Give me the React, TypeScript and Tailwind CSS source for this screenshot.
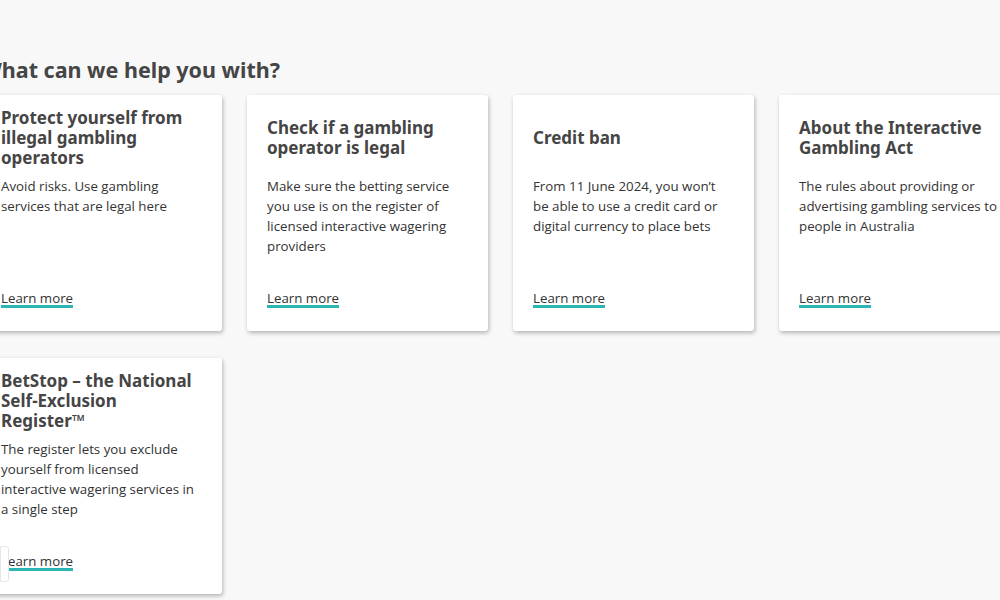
import React from "react";

const cards = [
  {
    title: "Protect yourself from illegal gambling operators",
    body: "Avoid risks. Use gambling services that are legal here",
  },
  {
    title: "Check if a gambling operator is legal",
    body: "Make sure the betting service you use is on the register of licensed interactive wagering providers",
  },
  {
    title: "Credit ban",
    body: "From 11 June 2024, you won\u2019t be able to use a credit card or digital currency to place bets",
  },
  {
    title: "About the Interactive Gambling Act",
    body: "The rules about providing or advertising gambling services to people in Australia",
  },
  {
    title: "BetStop \u2013 the National Self-Exclusion Register\u2122",
    body: "The register lets you exclude yourself from licensed interactive wagering services in a single step",
  },
];

function Card({ title, body, idx }: { title: string; body: string; idx: number }) {
  return (
    <div className="relative flex h-[236px] flex-col rounded-[3px] bg-white pl-5 pr-4 pt-[13px] pb-[22px] shadow-[1px_2px_4px_rgba(0,0,0,0.28)]">
      <div className="flex min-h-[60px] items-center">
        <h3 className="max-w-[193px] text-[17px] font-bold leading-[20px] text-[#454545]" style={{ fontFamily: '"Noto Sans", sans-serif' }}>
          {title}
        </h3>
      </div>
      <p className="mt-2 max-w-[201px] text-[13.3px] leading-[20px] text-[#333]" style={{ fontFamily: '"Open Sans", sans-serif' }}>
        {body}
      </p>
      <div className="mt-auto">
        <span className="inline-block border-b-[3px] border-[#2cb5b3] text-[13.3px] leading-[14px] text-[#333]" style={{ fontFamily: '"Open Sans", sans-serif' }}>
          Learn more
        </span>
      </div>
      {idx === 4 && (
        <div className="absolute left-[19px] top-[188px] h-[36px] w-[9px] rounded-r-[3px] border border-[#e6e6e6] bg-white" />
      )}
    </div>
  );
}

export default function App() {
  return (
    <div className="min-h-[600px] w-[1000px] overflow-hidden bg-[#f8f8f8]">
      <div className="ml-[-19px] w-[1040px] pt-[58px]">
        <h2 className="text-[21.5px] font-bold leading-[24px] text-[#454545]" style={{ fontFamily: '"Noto Sans", sans-serif' }}>
          What can we help you with?
        </h2>
        <div className="mt-[13px] grid grid-cols-[repeat(4,241px)] gap-x-[25px] gap-y-[27px]">
          {cards.map((c, i) => (
            <Card key={i} idx={i} title={c.title} body={c.body} />
          ))}
        </div>
      </div>
    </div>
  );
}
